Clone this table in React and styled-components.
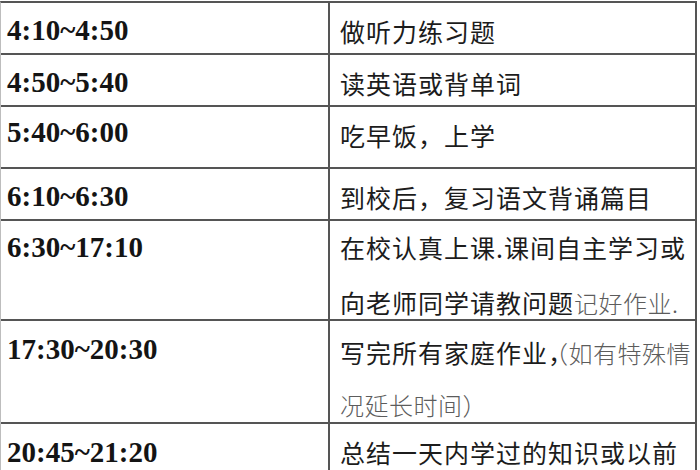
import React from "react";
import styled, { createGlobalStyle } from "styled-components";

const Global = createGlobalStyle`
  html, body { margin: 0; padding: 0; background: #fff; }
  body { width: 700px; height: 470px; overflow: hidden; }
`;

const Table = styled.div`
  margin-top: 1px;
  width: 697px;
  box-sizing: border-box;
  border-top: 2px solid #555;
  border-right: 2px solid #555;
  border-left: 1px solid #bdbdbd;
  display: flex;
  flex-direction: column;
`;

const Row = styled.div`
  display: grid;
  grid-template-columns: 329px 1fr;
  height: ${(p) => p.h}px;
  flex: none;
  border-bottom: 2px solid #555;
  box-sizing: content-box;
`;

const TimeCell = styled.div`
  border-right: 2px solid #555;
  padding: ${(p) => p.pad}px 0 0 6px;
  font-family: "Liberation Serif", "Times New Roman", serif;
  font-weight: bold;
  font-size: 29px;
  line-height: 33px;
  color: #141414;
  white-space: nowrap;
`;

const TaskCell = styled.div`
  display: flex;
  flex-direction: column;
  gap: ${(p) => p.gap || 0}px;
  padding: ${(p) => p.pad}px 0 0 10px;
  font-family: "Noto Sans CJK SC", "Noto Sans", sans-serif;
  font-size: 25px;
  letter-spacing: 1px;
  line-height: 34px;
  color: #1c1c1c;
  white-space: nowrap;
  min-width: 0;
`;

const Line = styled.div``;

const Faint = styled.span`
  color: #5c5c5c;
  font-weight: 300;
  font-size: 24px;
  letter-spacing: 0.5px;
`;

const Comma = styled.span`
  letter-spacing: -17px;
`;

export default function App() {
  return (
    <>
      <Global />
      <Table>
        <Row h={50}>
          <TimeCell pad={11}>4:10~4:50</TimeCell>
          <TaskCell pad={11}>
            <Line>做听力练习题</Line>
          </TaskCell>
        </Row>
        <Row h={50}>
          <TimeCell pad={11}>4:50~5:40</TimeCell>
          <TaskCell pad={11}>
            <Line>读英语或背单词</Line>
          </TaskCell>
        </Row>
        <Row h={60}>
          <TimeCell pad={9}>5:40~6:00</TimeCell>
          <TaskCell pad={11}>
            <Line>吃早饭，上学</Line>
          </TaskCell>
        </Row>
        <Row h={50}>
          <TimeCell pad={11}>6:10~6:30</TimeCell>
          <TaskCell pad={11}>
            <Line>到校后，复习语文背诵篇目</Line>
          </TaskCell>
        </Row>
        <Row h={98}>
          <TimeCell pad={10}>6:30~17:10</TimeCell>
          <TaskCell pad={9} gap={21}>
            <Line>在校认真上课.课间自主学习或</Line>
            <Line>
              向老师同学请教问题<Faint>记好作业.</Faint>
            </Line>
          </TaskCell>
        </Row>
        <Row h={101}>
          <TimeCell pad={12}>17:30~20:30</TimeCell>
          <TaskCell pad={14} gap={17}>
            <Line>
              写完所有家庭作业<Comma>，</Comma>
              <Faint>（如有特殊情</Faint>
            </Line>
            <Line>
              <Faint>况延长时间）</Faint>
            </Line>
          </TaskCell>
        </Row>
        <Row h={80}>
          <TimeCell pad={12}>20:45~21:20</TimeCell>
          <TaskCell pad={11}>
            <Line>总结一天内学过的知识或以前</Line>
          </TaskCell>
        </Row>
      </Table>
    </>
  );
}
